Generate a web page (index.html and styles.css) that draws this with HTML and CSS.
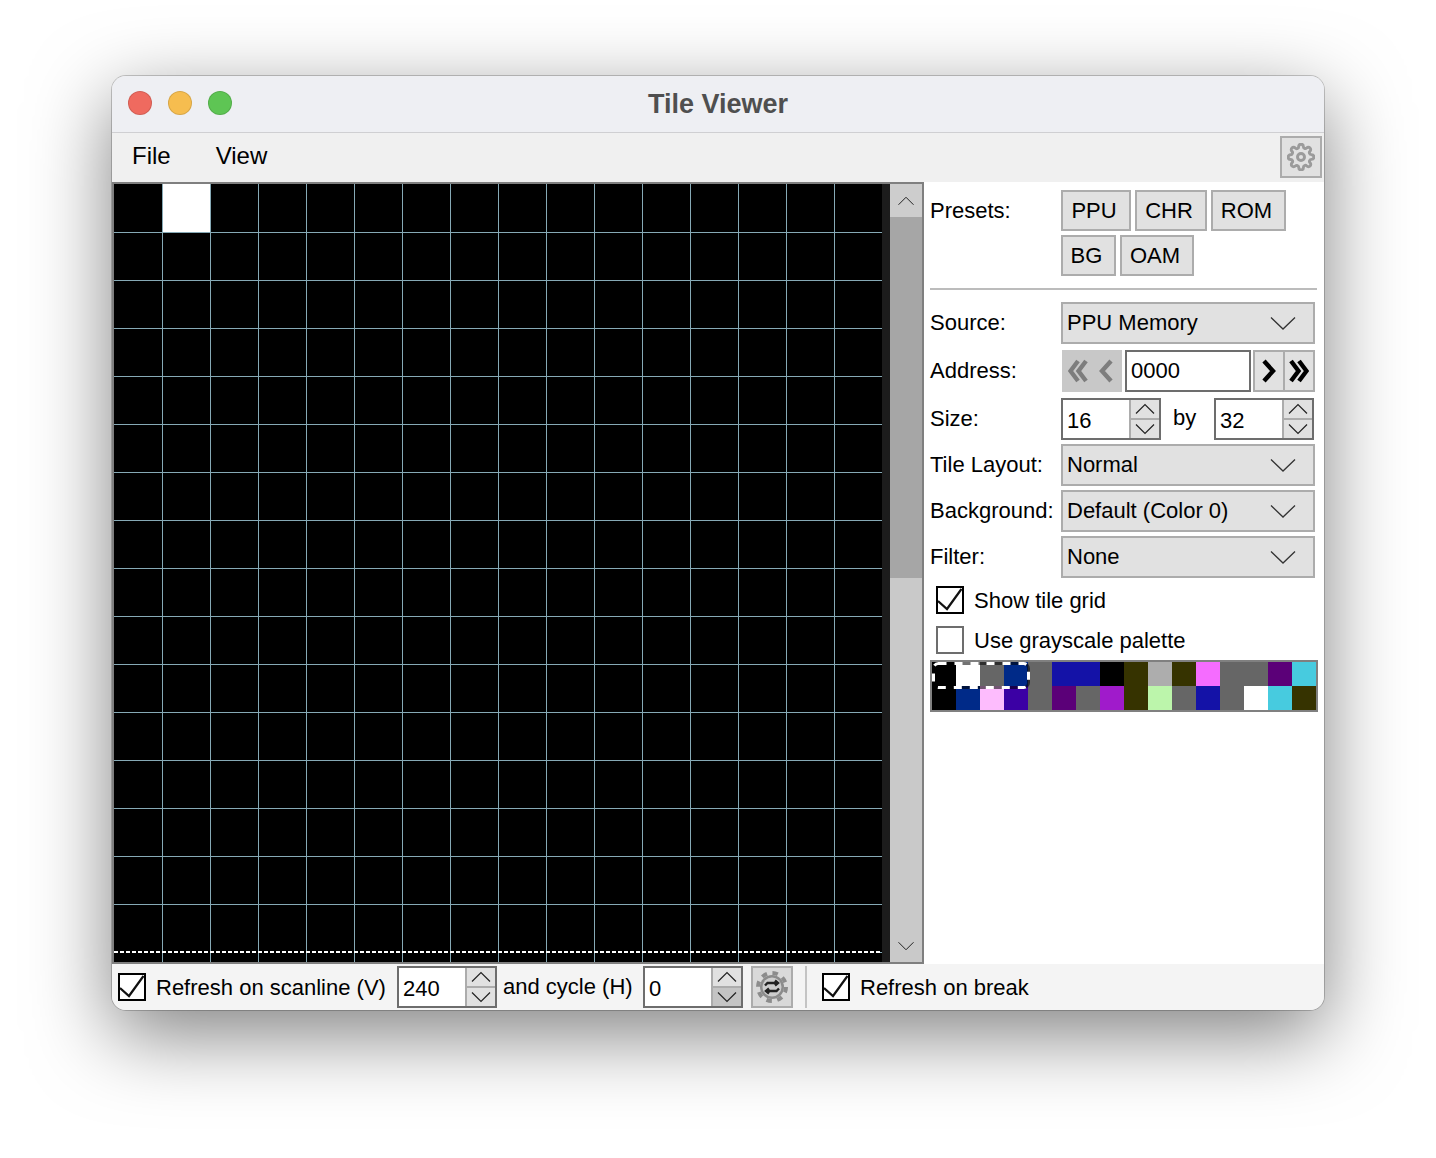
FILE: index.html
```html
<!DOCTYPE html>
<html lang="en">
<head>
<meta charset="utf-8">
<title>Tile Viewer</title>
<link rel="stylesheet" href="styles.css">
</head>
<body>
<svg class="defs" width="0" height="0" aria-hidden="true">
  <symbol id="up" viewBox="0 0 20 12"><path d="M1 10.5 10 1.5 19 10.5" fill="none" stroke="#222" stroke-width="1.2"/></symbol>
  <symbol id="down" viewBox="0 0 20 12"><path d="M1 1.5 10 10.5 19 1.5" fill="none" stroke="#222" stroke-width="1.2"/></symbol>
  <symbol id="combo" viewBox="0 0 26 14"><path d="M1 1.5 13 13 25 1.500" fill="none" stroke="#333" stroke-width="1.3"/></symbol>
  <symbol id="check" viewBox="0 0 24 24"><path d="M0 13 9 21 23.500 1" fill="none" stroke="#111" stroke-width="2.2"/></symbol>
</svg>
<main class="window">
  <header class="titlebar">
    <div class="lights"><span class="light red"></span><span class="light yellow"></span><span class="light green"></span></div>
    <h1 class="title">Tile Viewer</h1>
  </header>
  <nav class="menubar">
    <span class="menu-file">File</span>
    <span class="menu-view">View</span>
    <button class="gear-btn" aria-label="Settings">
      <svg width="28" height="28" viewBox="0 0 24 24" fill="none" stroke="#9b9b9b" stroke-width="2.500"><circle cx="12" cy="12" r="3"/><path d="M19.4 15a1.65 1.65 0 0 0 .33 1.82l.06.06a2 2 0 0 1 0 2.83 2 2 0 0 1-2.83 0l-.06-.06a1.65 1.65 0 0 0-1.82-.33 1.65 1.65 0 0 0-1 1.51V21a2 2 0 0 1-2 2 2 2 0 0 1-2-2v-.09A1.65 1.65 0 0 0 9 19.4a1.65 1.65 0 0 0-1.82.33l-.06.06a2 2 0 0 1-2.83 0 2 2 0 0 1 0-2.83l.06-.06a1.65 1.65 0 0 0 .33-1.82 1.65 1.65 0 0 0-1.51-1H3a2 2 0 0 1-2-2 2 2 0 0 1 2-2h.09A1.65 1.65 0 0 0 4.6 9a1.65 1.65 0 0 0-.33-1.82l-.06-.06a2 2 0 0 1 0-2.83 2 2 0 0 1 2.83 0l.06.06a1.65 1.65 0 0 0 1.82.33H9a1.65 1.65 0 0 0 1-1.51V3a2 2 0 0 1 2-2 2 2 0 0 1 2 2v.09a1.65 1.65 0 0 0 1 1.51 1.65 1.65 0 0 0 1.82-.33l.06-.06a2 2 0 0 1 2.83 0 2 2 0 0 1 0 2.83l-.06.06a1.65 1.65 0 0 0-.33 1.82V9a1.65 1.65 0 0 0 1.51 1H21a2 2 0 0 1 2 2 2 2 0 0 1-2 2h-.09a1.65 1.65 0 0 0-1.51 1z"/></svg>
    </button>
  </nav>
  <div class="content">
    <section class="viewer">
      <div class="canvas">
        <div class="tile-white"></div>
        <div class="dash-line"></div>
      </div>
      <div class="strip"></div>
      <div class="scrollbar">
        <div class="sb-btn"><svg width="18" height="10"><use href="#up"/></svg></div>
        <div class="sb-thumb"></div>
        <div class="sb-track"><svg width="18" height="10"><use href="#down"/></svg></div>
      </div>
    </section>
    <aside class="panel">
      <div class="presets">
        <span class="label">Presets:</span>
        <div class="preset-btns">
          <button class="btn w-ppu">PPU</button>
          <button class="btn w-chr">CHR</button>
          <button class="btn w-rom">ROM</button>
          <button class="btn w-bg">BG</button>
          <button class="btn w-oam">OAM</button>
        </div>
      </div>
      <hr class="sep">
      <div class="row gap6">
        <span class="label">Source:</span>
        <div class="combo"><span>PPU Memory</span><svg width="26" height="14"><use href="#combo"/></svg></div>
      </div>
      <div class="row gap6">
        <span class="label">Address:</span>
        <div class="address">
          <div class="nav-off">
            <svg width="20" height="24" viewBox="0 0 20 24" fill="none" stroke="#7d7d7d" stroke-width="4.4"><path d="M10 2 2.5 12 10 22M18 2 10.5 12 18 22"/></svg>
            <svg width="14" height="24" viewBox="0 0 14 24" fill="none" stroke="#7d7d7d" stroke-width="4.4"><path d="M12 2 3 12 12 22"/></svg>
          </div>
          <div class="addr-input">0000</div>
          <div class="nav-on">
            <div class="nav-cell"><svg width="14" height="24" viewBox="0 0 14 24" fill="none" stroke="#000" stroke-width="4.4"><path d="M2 2 11 12 2 22"/></svg></div>
            <div class="nav-cell"><svg width="20" height="24" viewBox="0 0 20 24" fill="none" stroke="#000" stroke-width="4.4"><path d="M2 2 9.5 12 2 22M10 2 17.5 12 10 22"/></svg></div>
          </div>
        </div>
      </div>
      <div class="row gap4">
        <span class="label">Size:</span>
        <div class="size">
          <div class="spin"><span class="spin-val">16</span><div class="spin-btns"><div class="spin-b"><svg width="20" height="12"><use href="#up"/></svg></div><div class="spin-b"><svg width="20" height="12"><use href="#down"/></svg></div></div></div>
          <span class="by">by</span>
          <div class="spin"><span class="spin-val">32</span><div class="spin-btns"><div class="spin-b"><svg width="20" height="12"><use href="#up"/></svg></div><div class="spin-b"><svg width="20" height="12"><use href="#down"/></svg></div></div></div>
        </div>
      </div>
      <div class="row gap4">
        <span class="label">Tile Layout:</span>
        <div class="combo"><span>Normal</span><svg width="26" height="14"><use href="#combo"/></svg></div>
      </div>
      <div class="row gap4">
        <span class="label">Background:</span>
        <div class="combo"><span>Default (Color 0)</span><svg width="26" height="14"><use href="#combo"/></svg></div>
      </div>
      <div class="row gap8">
        <span class="label">Filter:</span>
        <div class="combo"><span>None</span><svg width="26" height="14"><use href="#combo"/></svg></div>
      </div>
      <div class="check-row">
        <span class="cbox"><svg width="24" height="24"><use href="#check"/></svg></span><span class="check-text">Show tile grid</span>
      </div>
      <div class="check-row">
        <span class="cbox off"></span><span class="check-text">Use grayscale palette</span>
      </div>
      <div class="palette">
        <i class="c-000"></i><i class="c-fff"></i><i class="c-666"></i><i class="c-02a"></i><i class="c-666"></i><i class="c-14a"></i><i class="c-14a"></i><i class="c-000"></i><i class="c-330"></i><i class="c-adb"></i><i class="c-330"></i><i class="c-f6f"></i><i class="c-666"></i><i class="c-666"></i><i class="c-507"></i><i class="c-4cd"></i>
        <i class="c-000"></i><i class="c-02a"></i><i class="c-fbf"></i><i class="c-30a"></i><i class="c-666"></i><i class="c-507"></i><i class="c-666"></i><i class="c-91c"></i><i class="c-330"></i><i class="c-bfa"></i><i class="c-666"></i><i class="c-14a"></i><i class="c-666"></i><i class="c-fff"></i><i class="c-4cd"></i><i class="c-330"></i>
        <svg class="pal-sel" width="98" height="27" viewBox="0 0 98 27" fill="none"><rect x="1.5" y="1.5" width="95" height="24" rx="5" stroke="#000" stroke-opacity=".55" stroke-width="3"/><rect x="1.5" y="1.5" width="95" height="24" rx="5" stroke="#fff" stroke-width="3" stroke-dasharray="8 8"/></svg>
      </div>
    </aside>
  </div>
  <footer class="statusbar">
    <span class="cbox"><svg width="24" height="24"><use href="#check"/></svg></span>
    <span class="st-refresh">Refresh on scanline (V)</span>
    <div class="spin tall"><span class="spin-val">240</span><div class="spin-btns"><div class="spin-b"><svg width="20" height="12"><use href="#up"/></svg></div><div class="spin-b"><svg width="20" height="12"><use href="#down"/></svg></div></div></div>
    <span class="st-cycle">and cycle (H)</span>
    <div class="spin tall"><span class="spin-val">0</span><div class="spin-btns"><div class="spin-b"><svg width="20" height="12"><use href="#up"/></svg></div><div class="spin-b darker"><svg width="20" height="12"><use href="#down"/></svg></div></div></div>
    <button class="refresh-btn" aria-label="Refresh">
      <svg width="34" height="34" viewBox="0 0 34 34"><circle cx="17" cy="17" r="12" fill="#8c8c8c"/><circle cx="17" cy="17" r="14" fill="none" stroke="#8c8c8c" stroke-width="4" stroke-dasharray="5.5 5.5"/><circle cx="17" cy="17" r="9.5" fill="#cdcdcd"/><path d="M10 15.5 12.5 13H23M20 10.5 23 13 20 15.5M24 18.5 21.500 21H11M14 23.500 11 21 14 18.500" fill="none" stroke="#222" stroke-width="2.400"/></svg>
    </button>
    <span class="st-sep"></span>
    <span class="cbox"><svg width="24" height="24"><use href="#check"/></svg></span>
    <span class="st-break">Refresh on break</span>
  </footer>
</main>
</body>
</html>
```

FILE: styles.css
```css
* { box-sizing: border-box; }
html, body { margin: 0; height: 1158px; overflow: hidden; background: #fff; }
body { padding: 76px 112px 0; font-family: "Liberation Sans", Arial, sans-serif; font-size: 22px; color: #000; }
.defs { position: absolute; }
button { font: inherit; color: inherit; padding: 0; margin: 0; }

.window {
  width: 1212px; height: 934px; border-radius: 14px; overflow: hidden;
  display: flex; flex-direction: column; background: #f0f0f0;
  box-shadow: 0 0 0 1px rgba(0,0,0,.2), 0 24px 80px rgba(0,0,0,.5);
}

.titlebar {
  height: 57px; flex: none; display: flex; align-items: center; justify-content: center; position: relative;
  background: #eeeff3; border-bottom: 1px solid #cfcfd2;
}
.lights { position: absolute; left: 16px; top: 15px; display: flex; gap: 16px; }
.light { width: 24px; height: 24px; border-radius: 50%; border: 1px solid rgba(0,0,0,.12); }
.red { background: #ef6a5f; }
.yellow { background: #f6bd4f; }
.green { background: #5ec554; }
.title { margin: 0; font-size: 27px; font-weight: 700; color: #4f4f4f; }

.menubar { height: 49px; flex: none; display: flex; align-items: center; padding: 0 2px 2px 20px; background: #f0f0f0; font-size: 24px; }
.menu-file { margin: 0 45px 2px 0; }
.menu-view { margin-bottom: 2px; }
.gear-btn { margin-left: auto; width: 42px; height: 42px; border: 2px solid #acacac; background: #e1e1e1; display: flex; align-items: center; justify-content: center; }

.content { flex: 1; display: flex; min-height: 0; background: #fff; }

.viewer { width: 812px; flex: none; display: flex; border: 2px solid #7f7f7f; }
.canvas { width: 768px; flex: none; position: relative; background: #000; }
.canvas::before, .canvas::after { content: ""; position: absolute; right: 0; bottom: 0; }
.canvas::before {
  left: 1px; top: 0;
  background: linear-gradient(to right, transparent 47px, #86a9b5 47px) 0 0 / 48px 48px;
}
.canvas::after {
  left: 0; top: 1px;
  background: linear-gradient(to bottom, transparent 47px, #86a9b5 47px) 0 0 / 48px 48px;
}
.tile-white { position: absolute; z-index: 1; left: 49px; top: 0; width: 47px; height: 48px; background: #fff; }
.dash-line {
  position: absolute; z-index: 1; left: 0; right: 2px; top: 767px; height: 2px;
  background: repeating-linear-gradient(to right, #fff 0 4px, #000 4px 6px);
}
.strip { width: 8px; flex: none; background: #1c1c1c; }
.scrollbar { width: 32px; flex: none; display: flex; flex-direction: column; background: #c9c9c9; }
.sb-btn { height: 33px; flex: none; background: #cdcdcd; display: flex; justify-content: center; padding-top: 12px; }
.sb-thumb { height: 361px; flex: none; background: #a6a6a6; }
.sb-track { flex: 1; display: flex; justify-content: center; align-items: flex-end; padding-bottom: 11px; }

.panel { flex: 1; padding: 8px 7px 0 6px; background: #fff; }
.label { width: 131px; flex: none; }
.presets { display: flex; }
.presets .label { padding-top: 8px; }
.preset-btns { display: flex; flex-wrap: wrap; gap: 4px; width: 240px; }
.btn { height: 41px; border: 2px solid #acacac; background: #e1e1e1; padding-right: 4px; }
.w-ppu { width: 70px; }
.w-chr { width: 72px; }
.w-rom { width: 75px; }
.w-bg { width: 55px; }
.w-oam { width: 74px; }
.sep { height: 2px; margin: 12px 1px 12px 0; border: 0; background: #bcbcbc; }

.row { display: flex; align-items: center; height: 42px; }
.gap6 { margin-bottom: 6px; }
.gap4 { margin-bottom: 4px; }
.gap8 { margin-bottom: 8px; }
.combo {
  width: 254px; height: 42px; display: flex; align-items: center; justify-content: space-between;
  border: 2px solid #acacac; background: #e1e1e1; padding: 0 17px 0 4px;
}

.address { width: 254px; display: flex; height: 42px; }
.nav-off { width: 60px; margin-left: 1px; background: #c8c8c8; display: flex; align-items: center; justify-content: center; gap: 11px; padding-right: 4px; }
.addr-input { width: 126px; margin-left: 3px; border: 2px solid #6d6d6d; background: #fff; padding-left: 4px; line-height: 37px; }
.nav-on { width: 62px; margin-left: 2px; display: flex; border: 2px solid #acacac; background: #e1e1e1; }
.nav-cell { flex: 1; display: flex; align-items: center; justify-content: center; }
.nav-cell + .nav-cell { border-left: 2px solid #acacac; }

.size { display: flex; align-items: center; width: 254px; }
.by { width: 53px; padding-left: 12px; margin-top: -2px; }
.spin { width: 100px; height: 42px; display: flex; border: 2px solid #6d6d6d; background: #fff; flex: none; }
.spin-val { flex: 1; padding-left: 4px; line-height: 42px; }
.spin-btns { width: 30px; display: flex; flex-direction: column; background: #e1e1e1; border-left: 2px solid #acacac; }
.spin-b { flex: 1; display: flex; align-items: center; justify-content: center; }
.spin-b + .spin-b { border-top: 2px solid #acacac; }
.darker { background: #c4c4c4; }

.cbox { width: 28px; height: 28px; flex: none; border: 2px solid #000; background: #fff; display: flex; align-items: center; justify-content: center; }
.cbox.off { border-color: #6d6d6d; }
.check-row { display: flex; align-items: center; gap: 10px; height: 28px; margin: 0 0 12px 6px; }
.check-text { margin-top: 2px; }

.palette { position: relative; width: 388px; height: 52px; margin-top: -6px; display: grid; grid-template-columns: repeat(16, 24px); grid-auto-rows: 24px; border: 2px solid #808080; background: #808080; }
.pal-sel { position: absolute; left: 0; top: 0; }
.c-000 { background: #000; }
.c-fff { background: #fff; }
.c-666 { background: #666; }
.c-02a { background: #002a88; }
.c-14a { background: #1412a7; }
.c-330 { background: #363300; }
.c-adb { background: #adadad; }
.c-f6f { background: #f56cff; }
.c-507 { background: #5b0078; }
.c-4cd { background: #47cbdf; }
.c-fbf { background: #fdbcfd; }
.c-30a { background: #3b00a4; }
.c-91c { background: #a01bcb; }
.c-bfa { background: #bcf5ab; }

.statusbar { height: 46px; flex: none; display: flex; align-items: center; background: #f4f4f4; padding-left: 6px; }
.st-refresh { margin: 2px 0 0 10px; width: 241px; white-space: nowrap; }
.st-cycle { margin-left: 6px; width: 140px; white-space: nowrap; }
.refresh-btn { width: 42px; height: 42px; margin-left: 8px; border: 2px solid #acacac; background: #d9d9d9; display: flex; align-items: center; justify-content: center; }
.st-sep { width: 2px; height: 42px; background: #c4c4c4; margin: 0 15px 0 12px; }
.st-break { margin: 2px 0 0 10px; }
```
